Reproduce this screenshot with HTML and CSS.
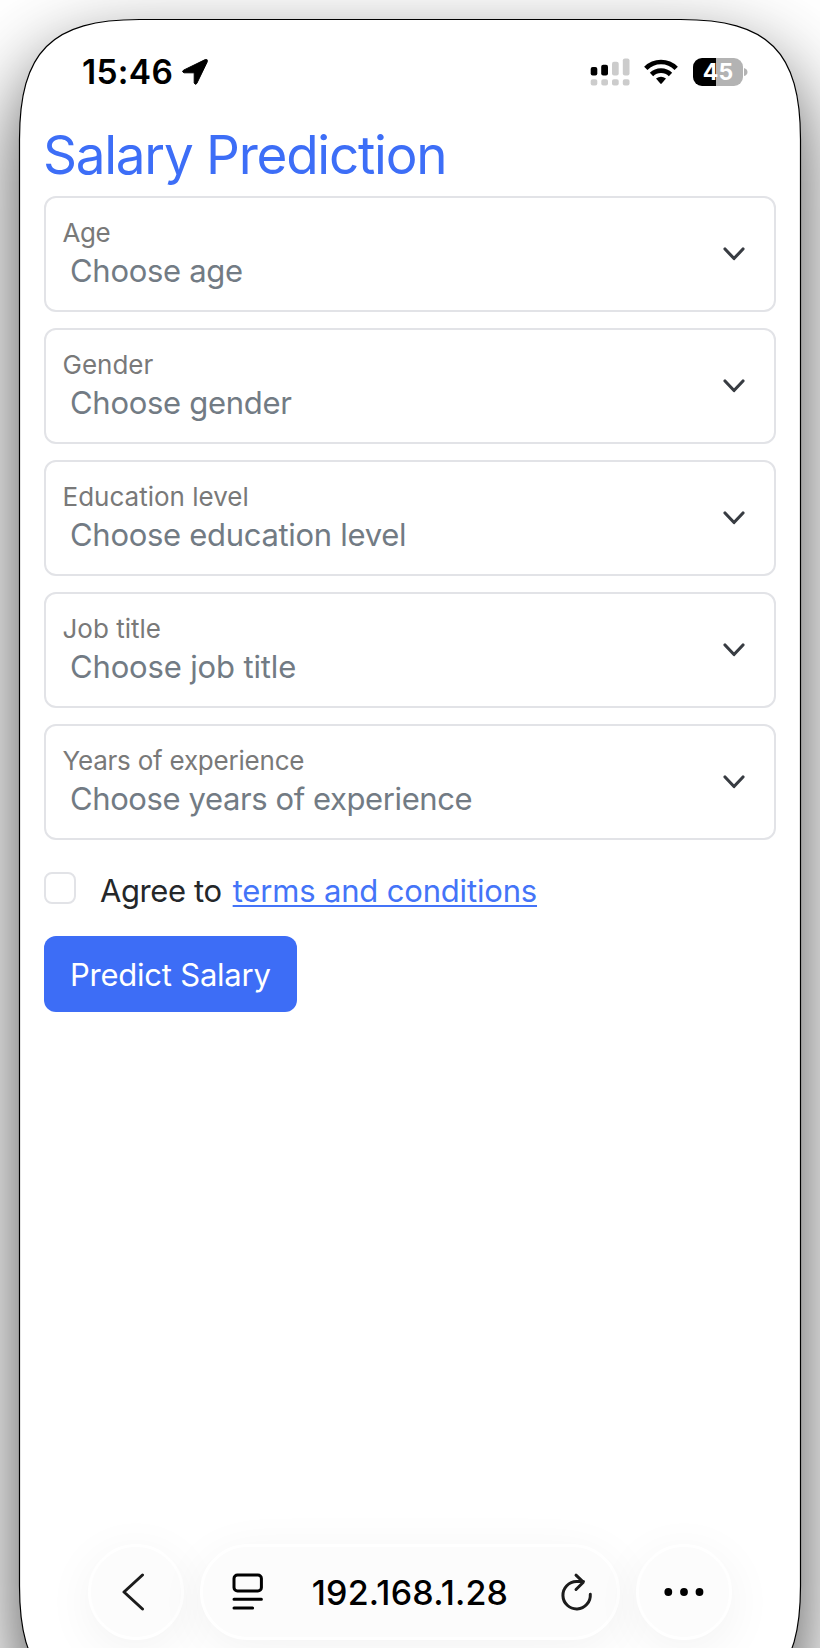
FILE: index.html
```html
<!DOCTYPE html>
<html lang="en">
<head>
<meta charset="utf-8">
<title>Salary Prediction</title>
<link rel="stylesheet" href="styles.css">
</head>
<body>
<svg class="frame" width="820" height="1648" viewBox="0 0 820 1648">
  <path d="M19.5 139.5C19.5 51.500 51.500 19.500 139.500 19.500H680.500C768.500 19.500 800.500 51.500 800.500 139.500V1586C800.500 1674 768.500 1706 680.500 1706H139.500C51.500 1706 19.500 1674 19.500 1586Z"/>
</svg>
<div class="screen">
  <header class="status">
    <div class="clock"><span class="time">15:46</span>
      <svg class="arrow" width="28" height="28" viewBox="0 0 28 28"><path d="M2.500 12.200L24.200 1.600Q27 .9 26.300 3.700L15.800 25.400Q14.300 27.500 13.200 24.900V15.600Q13.200 14.800 12.400 14.800H3Q.4 13.700 2.500 12.200Z" stroke="#000" stroke-width="1"/></svg>
    </div>
    <div class="indicators">
      <svg width="40" height="28" viewBox="0 0 40 28">
        <g><rect x=".7" y="9" width="6.600" height="8.400" rx="2"/><rect x="11.200" y="6.800" width="6.800" height="10.600" rx="2"/></g>
        <g fill="#ccc"><rect x="22" y="3.700" width="6.700" height="13.700" rx="2"/><rect x="32.800" y=".5" width="6.700" height="16.900" rx="2"/><rect x=".7" y="21.200" width="6.600" height="6.300" rx="1.900"/><rect x="11.300" y="21.200" width="6.700" height="6.300" rx="1.900"/><rect x="22" y="21.200" width="6.700" height="6.300" rx="1.900"/><rect x="32.800" y="21.200" width="6.700" height="6.300" rx="1.900"/></g>
      </svg>
      <svg class="wifi" width="34" height="26" viewBox="0 0 34 26"><g fill="none" stroke="#000" stroke-width="4.700"><path d="M1.800 9.300A21.500 21.500 0 0 1 32.200 9.300"/><path d="M7.500 15.500A13.400 13.400 0 0 1 26.500 15.500"/></g><path d="M12 19.600Q17 15.900 22 19.600L17.700 24.600Q17 25.300 16.300 24.600Z"/></svg>
      <div class="battery"><span>45</span></div>
      <svg class="cap" width="4" height="8" viewBox="0 0 4 8"><path d="M0 0Q3.500 1 3.500 4T0 8Z" fill="#b3b3b3"/></svg>
    </div>
  </header>
  <main class="content">
    <h1 class="title">Salary Prediction</h1>
    <form class="form">
      <div class="field"><div><div class="label l-age">Age</div><div class="value v-age">Choose age</div></div><svg class="chev" width="22" height="14" viewBox="0 0 22 14"><path d="M2 2L11 11.500L20 2"/></svg></div>
      <div class="field"><div><div class="label l-gender">Gender</div><div class="value v-gender">Choose gender</div></div><svg class="chev" width="22" height="14" viewBox="0 0 22 14"><path d="M2 2L11 11.500L20 2"/></svg></div>
      <div class="field"><div><div class="label l-edu">Education level</div><div class="value v-edu">Choose education level</div></div><svg class="chev" width="22" height="14" viewBox="0 0 22 14"><path d="M2 2L11 11.500L20 2"/></svg></div>
      <div class="field"><div><div class="label l-job">Job title</div><div class="value v-job">Choose job title</div></div><svg class="chev" width="22" height="14" viewBox="0 0 22 14"><path d="M2 2L11 11.500L20 2"/></svg></div>
      <div class="field"><div><div class="label l-years">Years of experience</div><div class="value v-years">Choose years of experience</div></div><svg class="chev" width="22" height="14" viewBox="0 0 22 14"><path d="M2 2L11 11.500L20 2"/></svg></div>
    </form>
    <div class="agree"><span class="box"></span><span class="agree-text">Agree to</span><a class="terms">terms and conditions</a></div>
    <div class="button"><span>Predict Salary</span></div>
  </main>
  <nav class="toolbar">
    <div class="pill round"><svg width="24" height="38" viewBox="0 0 24 38"><path class="line" d="M21.500 2L3 19L21.500 36"/></svg></div>
    <div class="pill address">
      <svg class="reader" width="32" height="38" viewBox="0 0 32 38"><g fill="none" stroke="#000" stroke-width="3" stroke-linecap="round"><rect x="2" y="2" width="27.400" height="16" rx="3.500"/><path d="M2 26.300H29.400M2 35H20.600"/></g></svg>
      <span class="ip">192.168.1.28</span>
      <svg class="reload" width="32" height="38" viewBox="0 0 32 38"><path class="line" d="M29.300 21.300A13.700 13.700 0 1 1 15.500 8.500H22.500M15 2.200L22.300 9.200L15 16.500"/></svg>
    </div>
    <div class="pill round"><svg width="40" height="8" viewBox="0 0 40 8"><circle cx="4.300" cy="4" r="3.900"/><circle cx="20" cy="4" r="3.900"/><circle cx="35.500" cy="4" r="3.900"/></svg></div>
  </nav>
</div>
</body>
</html>
```
FILE: styles.css
```css
* { box-sizing: border-box; }
body { margin: 0; width: 820px; height: 1648px; overflow: hidden; background: #fff; font-family: Inter, "Liberation Sans", sans-serif; }
svg { display: block; flex: none; }
.frame { position: absolute; left: 0; top: 0; }
.frame path { fill: #fff; stroke: #000; stroke-width: 1.2; filter: drop-shadow(0 34px 40px rgba(0,0,0,.7)); }
.screen { position: relative; width: 820px; height: 1648px; display: flex; flex-direction: column; padding: 0 44px; }
.status { height: 124px; display: flex; justify-content: space-between; align-items: flex-start; padding: 58px 28px 0 38px; }
.clock { display: flex; align-items: center; gap: 8px; height: 28px; }
.time { font-size: 33.5px; font-weight: 600; line-height: 28px; letter-spacing: .3px; white-space: nowrap; }
.indicators { display: flex; height: 28px; align-items: center; }
.wifi { margin-left: 14px; }
.battery { margin-left: 15px; width: 50px; height: 28px; border-radius: 9px; background: linear-gradient(90deg, #000 23px, #b3b3b3 23px); color: #fff; font-size: 23px; font-weight: 700; line-height: 28px; text-align: center; }
.cap { margin-left: 1px; }
.title { margin: 0 0 0 -1px; height: 72px; line-height: 62px; font-size: 53px; font-weight: 400; letter-spacing: -1.25px; color: #3d6ef7; white-space: nowrap; }
.form { display: flex; flex-direction: column; gap: 16px; }
.field { height: 116px; border: 2px solid #e2e3e7; border-radius: 12px; display: flex; justify-content: space-between; padding: 16px 29px 0 17px; }
.label { font-size: 26px; line-height: 38px; color: #797979; margin-left: -.5px; white-space: nowrap; }
.value { font-size: 31px; line-height: 38px; color: #727b84; padding-left: 7px; white-space: nowrap; }
.l-age { letter-spacing: -.4px; }
.l-years { letter-spacing: -.22px; }
.v-age, .v-gender, .v-edu { letter-spacing: -.3px; }
.v-job { letter-spacing: -.15px; }
.v-years { letter-spacing: -.4px; }
.chev { margin-top: 33px; }
.chev path { fill: none; stroke: #383c42; stroke-width: 3.1; stroke-linecap: round; stroke-linejoin: round; }
.agree { margin-top: 32px; height: 64px; display: flex; font-size: 31px; line-height: 38px; color: #24272a; white-space: nowrap; }
.box { width: 32px; height: 32px; border: 2px solid #e2e3e7; border-radius: 8px; margin-right: 24px; flex: none; }
.agree-text { letter-spacing: -.4px; }
.terms { margin-left: 11px; letter-spacing: -.17px; color: #4474f8; text-decoration: underline; text-decoration-thickness: 2px; text-underline-offset: 3px; text-decoration-skip-ink: none; }
.button { width: 253px; height: 76px; border-radius: 12px; background: #3d6df6; color: #fff; font-size: 31px; letter-spacing: -.23px; line-height: 77px; padding-left: 26px; white-space: nowrap; }
.toolbar { margin-top: auto; height: 104px; padding: 0 44px; display: flex; gap: 16px; }
.pill { height: 96px; border: 3px solid #fff; border-radius: 48px; background: #fcfcfc; display: flex; align-items: center; box-shadow: 0 10px 50px rgba(0,0,0,.055); }
.round { width: 96px; justify-content: center; flex: none; }
.round:first-child { padding-right: 6px; }
.address { width: 420px; justify-content: space-between; padding: 0 24px 0 29px; }
.ip { font-size: 34px; font-weight: 500; letter-spacing: .2px; margin-left: -5px; white-space: nowrap; }
.line { fill: none; stroke: #1c1c1c; stroke-width: 3; stroke-linecap: round; stroke-linejoin: round; }
```
